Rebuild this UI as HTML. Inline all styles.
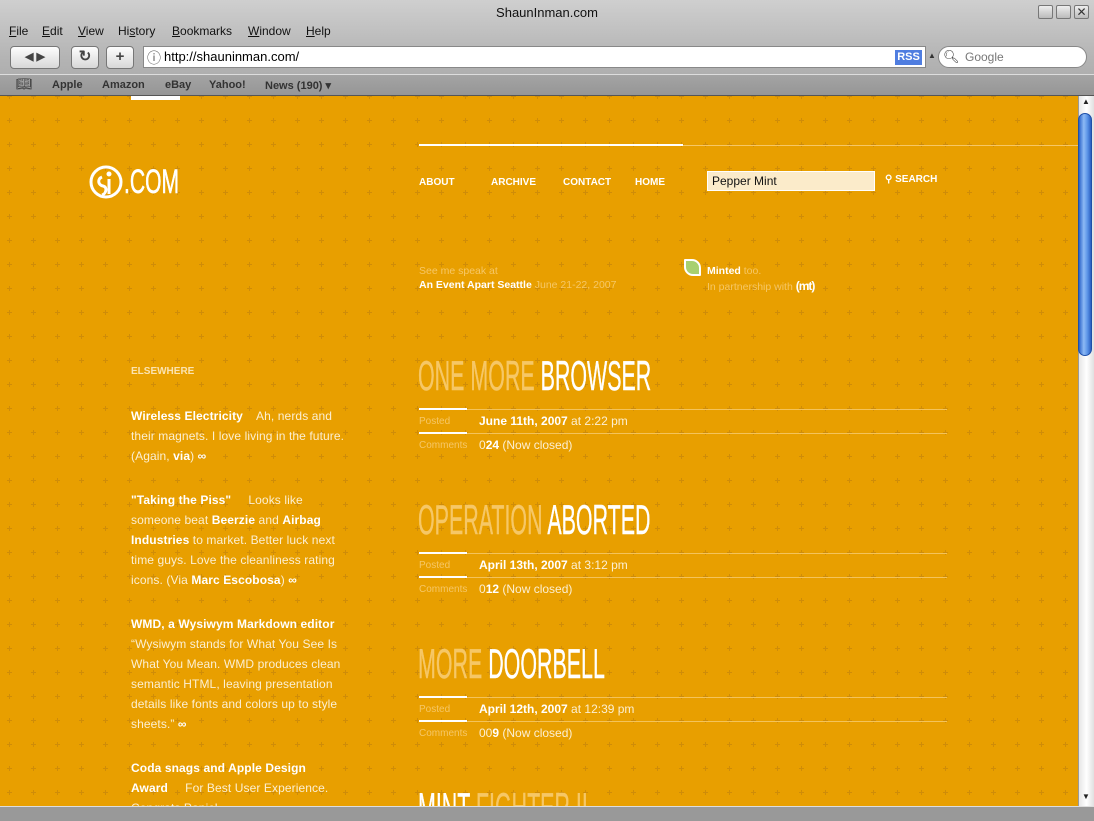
<!DOCTYPE html>
<html><head><meta charset="utf-8"><style>
*{margin:0;padding:0;box-sizing:border-box}
body{width:1094px;height:821px;overflow:hidden;font-family:"Liberation Sans",sans-serif;background:#8a8a8a;position:relative}
.a{position:absolute;white-space:nowrap}
#chrome{position:absolute;left:0;top:0;width:1094px;height:96px;background:linear-gradient(#cfcfcf,#b4b4b4 60%,#a8a8a8)}
.menu{font-size:12px;color:#111;top:24px}
.menu u{text-decoration:underline}
.btn{position:absolute;top:46px;height:23px;border:1px solid #777;border-radius:4px;background:linear-gradient(#fdfdfd,#d8d8d8);font-size:15px;color:#444;text-align:center;line-height:20px;font-weight:bold}
#bm{position:absolute;left:0;top:74px;width:1094px;height:22px;background:linear-gradient(#a4a4a4,#969696);border-top:1px solid #ddd;border-bottom:1px solid #555}
.bm{font-size:11px;font-weight:bold;color:#333;top:4px}
#vp{position:absolute;left:0;top:96px;width:1078px;height:710px;background-color:#e89f00;overflow:hidden}
.nav{font-size:10px;font-weight:bold;color:#fff;top:81px}
.fd{color:#f6c766}
.wh{color:#fff;font-weight:bold}
.side{position:absolute;left:131px;width:216px;font-size:12px;line-height:20px;color:#fcefd2;letter-spacing:.1px}
.side b{color:#fff}
.ttl{position:absolute;left:418px;font-size:42px;line-height:42px;transform:scaleX(.51);transform-origin:left;white-space:nowrap;color:#fff;-webkit-text-stroke:.4px currentColor}
.ttl span{color:#f6c766}
.ln{position:absolute;left:419px;width:528px;height:1px;background:#f4c35a}
.ln:before{content:"";position:absolute;left:0;top:-1px;width:48px;height:2px;background:#fff}
.lab{position:absolute;left:419px;font-size:10px;color:#f6c766}
.val{position:absolute;left:479px;font-size:12px;color:#fcefd2}
.val b{color:#fff}
</style></head><body>
<div id="chrome">
 <div class="a" style="left:0;width:1094px;text-align:center;top:5px;font-size:13px;color:#111">ShaunInman.com</div>
 <div class="a" style="left:1038px;top:5px;width:15px;height:14px;border:1px solid #777;border-radius:2px;background:linear-gradient(#eee,#bbb)"></div>
 <div class="a" style="left:1056px;top:5px;width:15px;height:14px;border:1px solid #777;border-radius:2px;background:linear-gradient(#eee,#bbb)"></div>
 <div class="a" style="left:1074px;top:5px;width:15px;height:14px;border:1px solid #777;border-radius:2px;background:linear-gradient(#eee,#bbb);font-size:12px;line-height:12px;text-align:center;color:#333">✕</div>
 <div class="a menu" style="left:9px"><u>F</u>ile</div>
 <div class="a menu" style="left:42px"><u>E</u>dit</div>
 <div class="a menu" style="left:78px"><u>V</u>iew</div>
 <div class="a menu" style="left:118px">Hi<u>s</u>tory</div>
 <div class="a menu" style="left:172px"><u>B</u>ookmarks</div>
 <div class="a menu" style="left:248px"><u>W</u>indow</div>
 <div class="a menu" style="left:306px"><u>H</u>elp</div>
 <div class="btn" style="left:10px;width:50px;font-size:11px">◀ ▶</div>
 <div class="btn" style="left:71px;width:28px">↻</div>
 <div class="btn" style="left:106px;width:28px">+</div>
 <div class="a" style="left:143px;top:46px;width:783px;height:22px;background:#fff;border:1px solid #888"></div>
 <div class="a" style="left:147px;top:48px;font-size:14px;color:#555">ⓘ</div>
 <div class="a" style="left:164px;top:49px;font-size:13px;color:#000">http://shauninman.com/</div>
 <div class="a" style="left:895px;top:50px;width:27px;height:15px;background:#4f7de0;color:#fff;font-size:11px;font-weight:bold;text-align:center;line-height:15px">RSS</div>
 <div class="a" style="left:928px;top:51px;font-size:8px;color:#333">▲</div>
 <div class="a" style="left:938px;top:46px;width:149px;height:22px;background:#fff;border:1px solid #888;border-radius:11px"></div>
 <div class="a" style="left:943px;top:49px;font-size:13px;color:#333">🔍︎</div>
 <div class="a" style="left:965px;top:50px;font-size:12px;color:#777">Google</div>
</div>
<div id="bm">
 <div class="a bm" style="left:16px;font-weight:normal;font-size:13px;top:1px">📖︎</div>
 <div class="a bm" style="left:52px">Apple</div>
 <div class="a bm" style="left:102px">Amazon</div>
 <div class="a bm" style="left:165px">eBay</div>
 <div class="a bm" style="left:209px">Yahoo!</div>
 <div class="a bm" style="left:265px">News (190) ▾</div>
</div>
<div id="vp">
 <svg class="a" style="left:0;top:0" width="1078" height="710"><defs><pattern id="p" x="0" y="-2" width="24" height="24" patternUnits="userSpaceOnUse"><path d="M9.5 0v5M7 2.5h5" stroke="#cf8c08" stroke-width="1"/></pattern></defs><rect width="1078" height="710" fill="url(#p)"/></svg>
 <div class="a" style="left:131px;top:0;width:49px;height:4px;background:#fff"></div>
 <div class="a" style="left:419px;top:49px;width:659px;height:1px;background:#f6c766"></div>
 <div class="a" style="left:419px;top:48px;width:264px;height:2px;background:#fff"></div>
 <svg class="a" style="left:89px;top:69px" width="36" height="36" viewBox="0 0 36 36"><circle cx="17" cy="17" r="15" fill="none" stroke="#fff" stroke-width="3"/><circle cx="20" cy="9" r="2.5" fill="#fff"/><path d="M13 12c-5 2-4 8 1 9s3 8-1 9M20 14v15" fill="none" stroke="#fff" stroke-width="3"/></svg>
 <div class="a" style="left:124px;top:69px;font-size:34px;color:#fff;transform:scaleX(.62);transform-origin:left;line-height:34px;-webkit-text-stroke:.6px #fff">.COM</div>
 <div class="a nav" style="left:419px">ABOUT</div>
 <div class="a nav" style="left:491px">ARCHIVE</div>
 <div class="a nav" style="left:563px">CONTACT</div>
 <div class="a nav" style="left:635px">HOME</div>
 <div class="a" style="left:707px;top:75px;width:168px;height:20px;background:#fbebca;border:1px solid #fff;font-size:12px;padding:2px 4px;color:#111">Pepper Mint</div>
 <div class="a nav" style="left:885px;top:78px">⚲ SEARCH</div>
 <div class="a fd" style="left:419px;top:169px;font-size:10.5px">See me speak at</div>
 <div class="a" style="left:419px;top:183px;font-size:10.5px"><span class="wh">An Event Apart Seattle</span> <span class="fd">June 21-22, 2007</span></div>
 <div class="a" style="left:684px;top:163px;width:17px;height:17px;background:#a8d070;border:2px solid #fff;border-radius:1px 9px 1px 9px"></div>
 <div class="a" style="left:707px;top:169px;font-size:10.5px"><span class="wh">Minted</span> <span class="fd">too.</span></div>
 <div class="a" style="left:707px;top:183px;font-size:10.5px"><span class="fd">In partnership with</span> <span class="wh" style="font-size:12px;letter-spacing:-1px">(mt)</span></div>
 <div class="a" style="left:131px;top:270px;font-size:10px;font-weight:bold;color:#fbe3b0">ELSEWHERE</div>
 <div class="side" style="top:310px"><b>Wireless Electricity</b> &nbsp;&nbsp; Ah, nerds and their magnets. I love living in the future. (Again, <b>via</b>) <b>∞</b></div>
 <div class="side" style="top:394px"><b>"Taking the Piss"</b> &nbsp;&nbsp;&nbsp; Looks like someone beat <b>Beerzie</b> and <b>Airbag Industries</b> to market. Better luck next time guys. Love the cleanliness rating icons. (Via <b>Marc Escobosa</b>) <b>∞</b></div>
 <div class="side" style="top:518px"><b>WMD, a Wysiwym Markdown editor</b><br>“Wysiwym stands for What You See Is What You Mean. WMD produces clean semantic HTML, leaving presentation details like fonts and colors up to style sheets.” <b>∞</b></div>
 <div class="side" style="top:662px"><b>Coda snags and Apple Design<br>Award</b> &nbsp;&nbsp;&nbsp; For Best User Experience.<br>Congrats Panic!</div>

 <div class="ttl" style="top:259px"><span>ONE MORE</span> BROWSER</div>
 <div class="ln" style="top:313px"></div><div class="ln" style="top:337px"></div>
 <div class="lab" style="top:320px">Posted</div><div class="val" style="top:318px"><b>June 11th, 2007</b> at 2:22 pm</div>
 <div class="lab" style="top:344px">Comments</div><div class="val" style="top:342px">0<b>24</b> (Now closed)</div>

 <div class="ttl" style="top:403px"><span>OPERATION</span> ABORTED</div>
 <div class="ln" style="top:457px"></div><div class="ln" style="top:481px"></div>
 <div class="lab" style="top:464px">Posted</div><div class="val" style="top:462px"><b>April 13th, 2007</b> at 3:12 pm</div>
 <div class="lab" style="top:488px">Comments</div><div class="val" style="top:486px">0<b>12</b> (Now closed)</div>

 <div class="ttl" style="top:547px"><span>MORE</span> DOORBELL</div>
 <div class="ln" style="top:601px"></div><div class="ln" style="top:625px"></div>
 <div class="lab" style="top:608px">Posted</div><div class="val" style="top:606px"><b>April 12th, 2007</b> at 12:39 pm</div>
 <div class="lab" style="top:632px">Comments</div><div class="val" style="top:630px">00<b>9</b> (Now closed)</div>

 <div class="ttl" style="top:691px">MINT <span>FIGHTER II</span></div>
</div>
<div class="a" style="left:1078px;top:96px;width:16px;height:710px;background:linear-gradient(90deg,#e6e6e6,#fff 50%,#e0e0e0);border-left:1px solid #999"></div>
<div class="a" style="left:1082px;top:97px;font-size:8px;color:#222">▲</div>
<div class="a" style="left:1078px;top:113px;width:14px;height:243px;border-radius:7px;background:linear-gradient(90deg,#2a62c8,#8dbaf5 40%,#5b94e8 70%,#2b5fc0);border:1px solid #1e4fa8"></div>
<div class="a" style="left:1082px;top:792px;font-size:8px;color:#222">▼</div>
<div class="a" style="left:0;top:806px;width:1094px;height:15px;background:#999;border-top:1px solid #ddd"></div>
</body></html>
